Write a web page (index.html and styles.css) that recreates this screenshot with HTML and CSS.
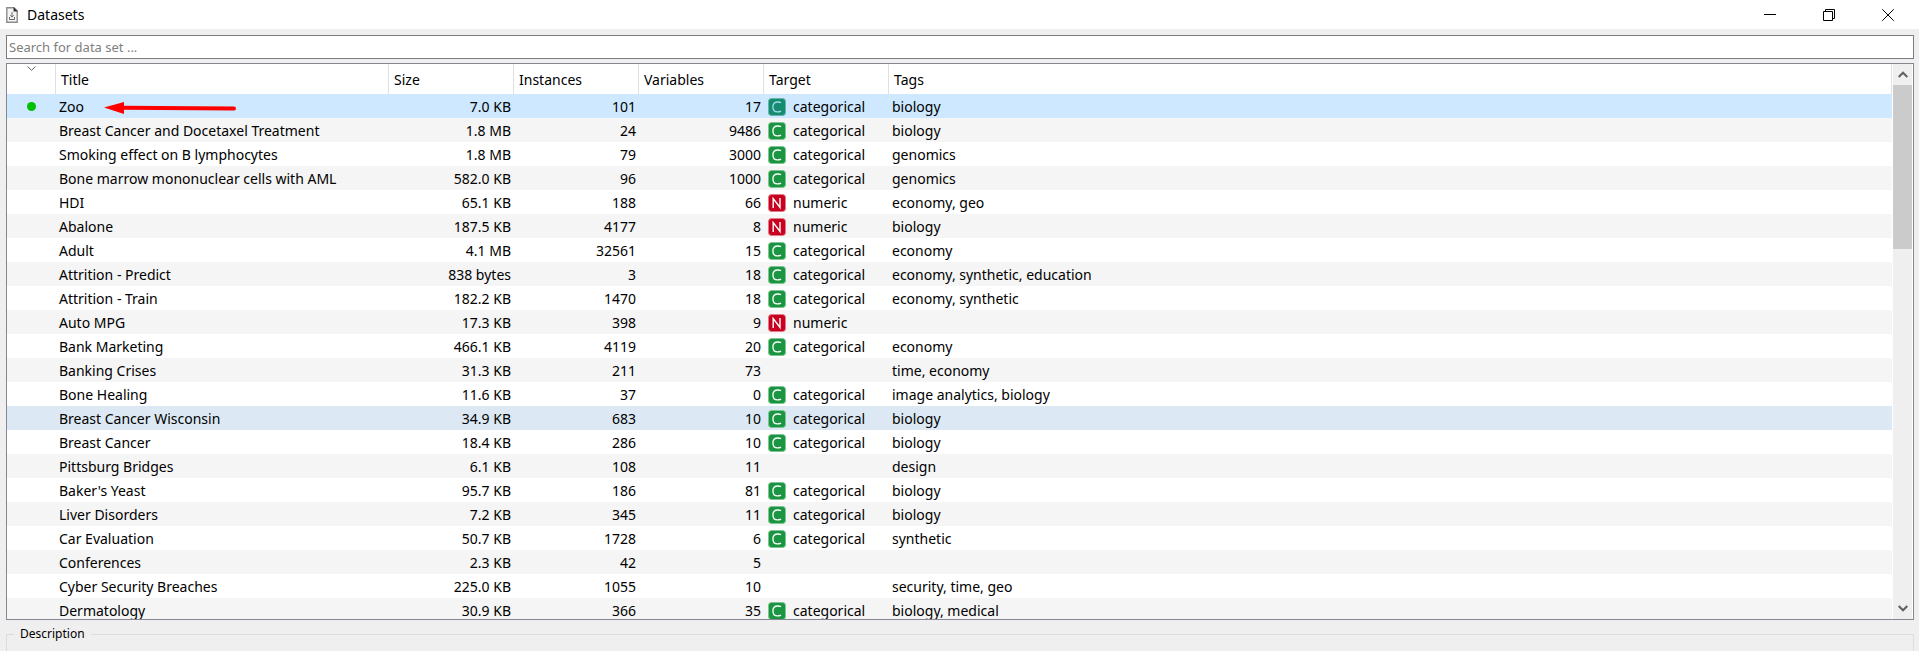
FILE: index.html
```html
<!DOCTYPE html>
<html lang="en">
<head>
<meta charset="utf-8">
<title>Datasets</title>
<link rel="stylesheet" href="styles.css">
</head>
<body>
<svg class="symbols" aria-hidden="true">
  <symbol id="cat" viewBox="0 0 18 18"><rect x="0.5" y="0.5" width="17" height="17" rx="3" fill="#1a9641" stroke="#7cc795"/><path d="M13 4.700C12 4.200 11 4 9.900 4 7 4 4.900 6 4.900 9 4.900 12 6.800 13.900 9.600 13.900 10.900 13.900 12 13.600 13 13.100" fill="none" stroke="#fff" stroke-width="1.300"/></symbol>
  <symbol id="catsel" viewBox="0 0 18 18"><rect x="0.5" y="0.5" width="17" height="17" rx="3" fill="#158b70" stroke="#66b5ab"/><path d="M13 4.700C12 4.200 11 4 9.900 4 7 4 4.900 6 4.900 9 4.900 12 6.800 13.900 9.600 13.900 10.900 13.900 12 13.600 13 13.100" fill="none" stroke="#a5d8ec" stroke-width="1.300"/></symbol>
  <symbol id="num" viewBox="0 0 18 18"><rect x="0.5" y="0.5" width="17" height="17" rx="3" fill="#ca0020" stroke="#e07a89"/><path d="M5.200 14V4.500L12 13.500V4" fill="none" stroke="#fff" stroke-width="1.400"/></symbol>
</svg>
<header class="titlebar">
  <svg class="app-icon" viewBox="0 0 12 16" aria-hidden="true"><path d="M.8.8H8L11.200 4V15.200H.8Z" fill="#f4f4f4" stroke="#8c8c8c" stroke-width="1.400"/><path d="M7.500 0L12 4.500H7.500Z" fill="#333"/><path d="M6 5V10M4.200 8.300L6 10.100 7.800 8.300M3.500 10V12.500H8.500V10" fill="none" stroke="#666"/></svg>
  <h1 class="title">Datasets</h1>
  <div class="window-buttons">
    <button class="window-button" aria-label="Minimize"><svg viewBox="0 0 12 12"><path d="M0 5.500H12"/></svg></button>
    <button class="window-button" aria-label="Restore"><svg viewBox="0 0 12 12"><path d="M.5 2.500H9.500V11.500H.5ZM2.500 2.500V.5H11.500V9.500H9.500"/></svg></button>
    <button class="window-button" aria-label="Close"><svg viewBox="0 0 12 12"><path d="M.3.3L11.700 11.700M11.700.3L.3 11.700"/></svg></button>
  </div>
</header>
<main class="content">
  <input class="search" type="text" placeholder="Search for data set ..." aria-label="Search for data set">
  <div class="frame">
    <div class="viewport">
      <table class="datasets">
        <colgroup><col class="c-mark"><col class="c-title"><col class="c-field"><col class="c-field"><col class="c-field"><col class="c-field"><col></colgroup>
        <thead><tr><th aria-label="Downloaded"><svg class="sort" viewBox="0 0 9 5" aria-hidden="true"><path d="M.5.5L4.500 4.300 8.500.5"/></svg></th><th>Title</th><th>Size</th><th>Instances</th><th>Variables</th><th>Target</th><th>Tags</th></tr></thead>
        <tbody>
          <tr class="selected"><td><span class="dot"></span></td><td class="marked">Zoo<svg class="arrow" viewBox="0 0 132 12" aria-hidden="true"><path d="M18 5.700L130 6.500" stroke="#f00" stroke-width="4" stroke-linecap="round"/><path d="M0 5.500L20 0V12Z" fill="#f00"/></svg></td><td>7.0 KB</td><td>101</td><td>17</td><td><svg class="kind"><use href="#catsel"/></svg>categorical</td><td>biology</td></tr>
          <tr><td></td><td>Breast Cancer and Docetaxel Treatment</td><td>1.8 MB</td><td>24</td><td>9486</td><td><svg class="kind"><use href="#cat"/></svg>categorical</td><td>biology</td></tr>
          <tr><td></td><td>Smoking effect on B lymphocytes</td><td>1.8 MB</td><td>79</td><td>3000</td><td><svg class="kind"><use href="#cat"/></svg>categorical</td><td>genomics</td></tr>
          <tr><td></td><td>Bone marrow mononuclear cells with AML</td><td>582.0 KB</td><td>96</td><td>1000</td><td><svg class="kind"><use href="#cat"/></svg>categorical</td><td>genomics</td></tr>
          <tr><td></td><td>HDI</td><td>65.1 KB</td><td>188</td><td>66</td><td><svg class="kind"><use href="#num"/></svg>numeric</td><td>economy, geo</td></tr>
          <tr><td></td><td>Abalone</td><td>187.5 KB</td><td>4177</td><td>8</td><td><svg class="kind"><use href="#num"/></svg>numeric</td><td>biology</td></tr>
          <tr><td></td><td>Adult</td><td>4.1 MB</td><td>32561</td><td>15</td><td><svg class="kind"><use href="#cat"/></svg>categorical</td><td>economy</td></tr>
          <tr><td></td><td>Attrition - Predict</td><td>838 bytes</td><td>3</td><td>18</td><td><svg class="kind"><use href="#cat"/></svg>categorical</td><td>economy, synthetic, education</td></tr>
          <tr><td></td><td>Attrition - Train</td><td>182.2 KB</td><td>1470</td><td>18</td><td><svg class="kind"><use href="#cat"/></svg>categorical</td><td>economy, synthetic</td></tr>
          <tr><td></td><td>Auto MPG</td><td>17.3 KB</td><td>398</td><td>9</td><td><svg class="kind"><use href="#num"/></svg>numeric</td><td></td></tr>
          <tr><td></td><td>Bank Marketing</td><td>466.1 KB</td><td>4119</td><td>20</td><td><svg class="kind"><use href="#cat"/></svg>categorical</td><td>economy</td></tr>
          <tr><td></td><td>Banking Crises</td><td>31.3 KB</td><td>211</td><td>73</td><td></td><td>time, economy</td></tr>
          <tr><td></td><td>Bone Healing</td><td>11.6 KB</td><td>37</td><td>0</td><td><svg class="kind"><use href="#cat"/></svg>categorical</td><td>image analytics, biology</td></tr>
          <tr class="hovered"><td></td><td>Breast Cancer Wisconsin</td><td>34.9 KB</td><td>683</td><td>10</td><td><svg class="kind"><use href="#cat"/></svg>categorical</td><td>biology</td></tr>
          <tr><td></td><td>Breast Cancer</td><td>18.4 KB</td><td>286</td><td>10</td><td><svg class="kind"><use href="#cat"/></svg>categorical</td><td>biology</td></tr>
          <tr><td></td><td>Pittsburg Bridges</td><td>6.1 KB</td><td>108</td><td>11</td><td></td><td>design</td></tr>
          <tr><td></td><td>Baker's Yeast</td><td>95.7 KB</td><td>186</td><td>81</td><td><svg class="kind"><use href="#cat"/></svg>categorical</td><td>biology</td></tr>
          <tr><td></td><td>Liver Disorders</td><td>7.2 KB</td><td>345</td><td>11</td><td><svg class="kind"><use href="#cat"/></svg>categorical</td><td>biology</td></tr>
          <tr><td></td><td>Car Evaluation</td><td>50.7 KB</td><td>1728</td><td>6</td><td><svg class="kind"><use href="#cat"/></svg>categorical</td><td>synthetic</td></tr>
          <tr><td></td><td>Conferences</td><td>2.3 KB</td><td>42</td><td>5</td><td></td><td></td></tr>
          <tr><td></td><td>Cyber Security Breaches</td><td>225.0 KB</td><td>1055</td><td>10</td><td></td><td>security, time, geo</td></tr>
          <tr><td></td><td>Dermatology</td><td>30.9 KB</td><td>366</td><td>35</td><td><svg class="kind"><use href="#cat"/></svg>categorical</td><td>biology, medical</td></tr>
        </tbody>
      </table>
    </div>
    <div class="scrollbar">
      <button class="scroll-button" aria-label="Scroll up"><svg viewBox="0 0 10 7"><path d="M.7 6L5 1.700 9.300 6"/></svg></button>
      <div class="track"><div class="thumb"></div></div>
      <button class="scroll-button" aria-label="Scroll down"><svg viewBox="0 0 10 7"><path d="M.7 1L5 5.300 9.300 1"/></svg></button>
    </div>
  </div>
  <fieldset class="description"><legend>Description</legend></fieldset>
</main>
</body>
</html>
```
FILE: styles.css
```css
* { box-sizing: border-box; }

body {
  margin: 0;
  height: 100vh;
  display: flex;
  flex-direction: column;
  overflow: hidden;
  background: #efefef;
  color: #000;
  font: 14px/20px "Noto Sans", "Open Sans", sans-serif;
}

button {
  border: 0;
  padding: 0;
  background: none;
  display: flex;
  align-items: center;
  justify-content: center;
}

.symbols { display: none; }

.titlebar {
  flex: none;
  display: flex;
  align-items: center;
  height: 29px;
  padding-left: 6px;
  background: #fff;
}
.app-icon { width: 12px; height: 16px; }
.title { margin: 0 auto 0 9px; font-size: 14px; font-weight: 400; }
.window-buttons { display: flex; padding-right: 2px; }
.window-button { width: 59px; height: 28px; }
.window-button svg { width: 12px; height: 12px; fill: none; stroke: #000; }

.content {
  flex: 1;
  min-height: 0;
  display: flex;
  flex-direction: column;
  padding: 6px 5px 0 6px;
}

.search {
  flex: none;
  height: 24px;
  width: 100%;
  border: 1px solid #7a7a80;
  padding: 0 2px;
  background: #fff;
  font: 13px "Noto Sans", sans-serif;
}
.search::placeholder { color: #808080; opacity: 1; }

.frame {
  flex: 1;
  min-height: 0;
  display: flex;
  gap: 1px;
  margin-top: 4px;
  border: 1px solid #828790;
  padding-right: 1px;
  background: #fff;
}
.viewport { flex: 1; min-width: 0; overflow: hidden; }

.datasets {
  width: 100%;
  table-layout: fixed;
  border-collapse: separate;
  border-spacing: 0;
}
.c-mark { width: 49px; }
.c-title { width: 333px; }
.c-field { width: 125px; }

th {
  height: 30px;
  padding: 2px 5px 0;
  border-right: 1px solid #e0e0e0;
  font-weight: 400;
  text-align: left;
}
th:first-child { vertical-align: top; padding: 2px 0 0; }
.sort {
  display: block;
  width: 9px;
  height: 5px;
  margin: 0 auto;
  fill: none;
  stroke: #606060;
}

td { height: 24px; padding: 1px 3px 0; white-space: nowrap; }
td:nth-child(n+3):nth-child(-n+5) { text-align: right; }
td:nth-child(6) { padding: 1px 4px 0; }
tbody tr:nth-child(even) { background: #f5f5f5; }
tbody .selected { background: #cde8ff; }
tbody tr.hovered { background: #dce9f4; }

.dot {
  display: block;
  width: 9px;
  height: 9px;
  margin: 0 auto;
  border-radius: 50%;
  background: #00c000;
}
.marked { position: relative; }
.arrow {
  position: absolute;
  left: 48px;
  top: 8px;
  width: 132px;
  height: 12px;
  overflow: visible;
}
.kind { width: 18px; height: 18px; margin-right: 7px; vertical-align: -4px; }

.scrollbar { width: 19px; display: flex; flex-direction: column; background: #efefef; }
.scroll-button { flex: none; height: 21px; }
.scroll-button svg { width: 10px; height: 7px; fill: none; stroke: #606060; stroke-width: 2; }
.track { flex: 1; }
.thumb { height: 32%; background: #cbcbcb; }

.description {
  flex: none;
  height: 25px;
  margin: 6px 0 0;
  padding: 0 7px;
  border: 1px solid #dcdcdc;
  border-bottom: 0;
}
.description legend { padding: 0 6px; font-size: 12px; line-height: 16px; }
```
